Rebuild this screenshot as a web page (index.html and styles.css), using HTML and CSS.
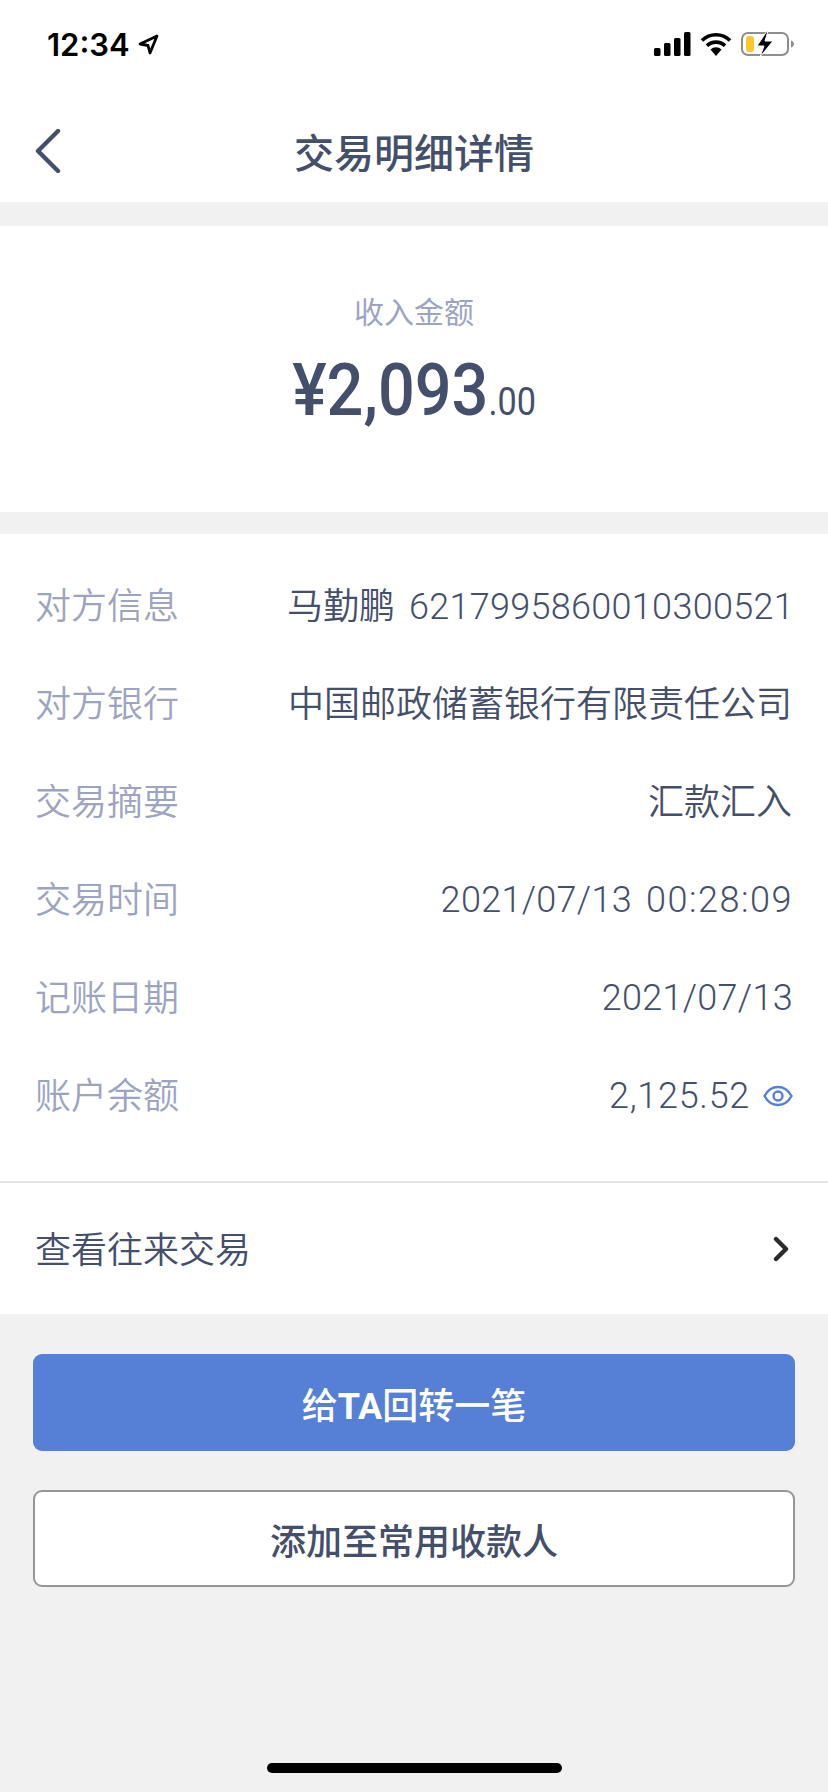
FILE: index.html
```html
<!DOCTYPE html>
<html lang="zh-CN">
<head>
  <meta charset="UTF-8">
  <meta name="viewport" content="width=device-width, initial-scale=1.0">
  <title>交易明细详情</title>
  <link rel="stylesheet" href="styles.css">
</head>
<body>
  <div class="page">
    <header class="top">
      <div class="status-bar">
        <div class="clock">
          <span>12:34</span>
          <svg width="21" height="21" viewBox="0 0 21 21"><path d="M19 2 2 10l8 1.500L12 19z" fill="none" stroke="#000" stroke-width="2.800" stroke-linejoin="round"/></svg>
        </div>
        <div class="status-icons">
          <svg width="37" height="24" viewBox="0 0 37 24"><rect x="0" y="16" width="6.500" height="8" rx="1.500"/><rect x="10" y="11" width="6.500" height="13" rx="1.500"/><rect x="20" y="6" width="6.500" height="18" rx="1.500"/><rect x="30" y="0" width="6.500" height="24" rx="1.500"/></svg>
          <svg width="32" height="24" viewBox="0 0 32 24"><path d="M2 8.500a20 20 0 0 1 28 0M7 13.700a13 13 0 0 1 18 0" fill="none" stroke="#000" stroke-width="3.600"/><path d="M10.500 17.500a8 8 0 0 1 11 0L16 24z"/></svg>
          <svg width="54" height="26" viewBox="0 0 54 26"><rect x="1" y="2" width="46" height="22" rx="6" fill="#fff" stroke="#8e8e8e" stroke-width="2"/><rect x="5" y="5" width="8" height="16" rx="3" fill="#f7c92b"/><path d="M50 9.500c2 .6 3 2 3 3.500s-1 2.900-3 3.500z" fill="#8e8e8e"/><path d="M26 0 16 15h7l-4 11 13-16h-8l3-10z" stroke="#fff" stroke-width="1"/></svg>
        </div>
      </div>
      <div class="nav">
        <svg class="back" width="26" height="44" viewBox="0 0 26 44"><path d="M23 2 3 22l20 20" fill="none" stroke="#444f6b" stroke-width="4.400" stroke-linecap="round" stroke-linejoin="round"/></svg>
        <h1>交易明细详情</h1>
      </div>
    </header>

    <section class="amount-card">
      <p class="amount-label">收入金额</p>
      <p class="amount"><span class="amount-main">¥2,093</span><span class="amount-cents">.00</span></p>
    </section>

    <section class="detail-card">
      <div class="rows">
        <div class="row"><span class="label">对方信息</span><span class="value">马勤鹏 <span class="account-no">6217995860010300521</span></span></div>
        <div class="row"><span class="label">对方银行</span><span class="value">中国邮政储蓄银行有限责任公司</span></div>
        <div class="row"><span class="label">交易摘要</span><span class="value">汇款汇入</span></div>
        <div class="row"><span class="label">交易时间</span><span class="value value-digits value-time">2021/07/13 <span class="time-part">00:28:09</span></span></div>
        <div class="row"><span class="label">记账日期</span><span class="value value-digits">2021/07/13</span></div>
        <div class="row">
          <span class="label">账户余额</span>
          <span class="value value-digits value-eye">2,125.52
            <svg width="30" height="22" viewBox="0 0 30 22"><path d="M1.500 11C5 4.500 10 2 15 2s10 2.500 13.500 9C25 17.500 20 20 15 20S5 17.500 1.500 11z" fill="none" stroke="#5580d6" stroke-width="2.400"/><circle cx="15" cy="11" r="4.500" fill="none" stroke="#5580d6" stroke-width="2.400"/></svg>
          </span>
        </div>
      </div>
      <div class="history">
        <span class="history-text">查看往来交易</span>
        <svg width="16" height="26" viewBox="0 0 16 26"><path d="M3 3l10 10L3 23" fill="none" stroke="#2b2b2d" stroke-width="4.400" stroke-linecap="round" stroke-linejoin="round"/></svg>
      </div>
    </section>

    <div class="actions">
      <button class="btn btn-primary">给<span class="btn-latin">TA</span>回转一笔</button>
      <button class="btn btn-outline">添加至常用收款人</button>
    </div>

    <div class="home-bar"></div>
  </div>
</body>
</html>
```

FILE: styles.css
```css
* {
  box-sizing: border-box;
}
html, body {
  margin: 0;
  padding: 0;
}
body {
  font-family: Inter, "Noto Sans CJK SC", sans-serif;
  background-color: #f1f1f1;
  color: #444f6b;
}
p, h1 {
  margin: 0;
}
.page {
  width: 828px;
  height: 1792px;
  display: flex;
  flex-direction: column;
  position: relative;
  overflow: hidden;
}
.top {
  height: 202px;
  background-color: #fff;
  margin-bottom: 24px;
}
.status-bar {
  height: 88px;
  padding: 0 33px 0 47px;
  display: flex;
  align-items: center;
  justify-content: space-between;
}
.clock {
  display: flex;
  align-items: center;
  gap: 8px;
  font-size: 31px;
  font-weight: 600;
  color: #000;
}
.status-icons {
  display: flex;
  align-items: center;
  gap: 9px;
}
.nav {
  height: 114px;
  padding: 11px 0 0 35px;
  display: flex;
  align-items: center;
  position: relative;
}
.nav h1 {
  position: absolute;
  left: 0;
  right: 0;
  text-align: center;
  font-size: 40px;
  font-weight: 500;
}
.amount-card {
  height: 286px;
  background-color: #fff;
  margin-bottom: 22px;
  padding-top: 64px;
  text-align: center;
}
.amount-label {
  font-size: 30px;
  line-height: 44px;
  color: #9ca4c2;
}
.amount {
  margin-top: 15px;
  line-height: 84px;
  font-family: Roboto, sans-serif;
  font-weight: 500;
  transform: scaleX(0.9);
}
.amount-main {
  font-size: 72px;
}
.amount-cents {
  font-size: 38px;
  font-weight: 400;
}
.detail-card {
  height: 780px;
  background-color: #fff;
  display: flex;
  flex-direction: column;
}
.rows {
  height: 649px;
  padding: 20px 36px 0 35px;
  border-bottom: 2px solid #e4e4e4;
}
.row {
  height: 98px;
  display: flex;
  align-items: center;
  justify-content: space-between;
  font-size: 36px;
  font-weight: 350;
}
.label {
  flex-shrink: 0;
  color: #9ca4c2;
}
.value {
  font-family: Roboto, "Noto Sans CJK SC", sans-serif;
  white-space: nowrap;
  color: #444f6b;
}
.account-no {
  letter-spacing: 0.3px;
  margin-left: 5px;
  margin-right: -2px;
}
.value-digits {
  padding-top: 6px;
  margin-right: -1px;
  letter-spacing: 0.3px;
}
.value-time {
  word-spacing: 5px;
}
.time-part {
  letter-spacing: 1.5px;
}
.value-eye {
  display: flex;
  align-items: center;
  gap: 13px;
  letter-spacing: 0.7px;
}
.history {
  flex: 1;
  padding: 0 39px 0 35px;
  display: flex;
  align-items: center;
  justify-content: space-between;
  font-size: 36px;
  font-weight: 350;
}
.history-text {
  padding-bottom: 3px;
}
.actions {
  padding: 40px 33px 0;
  display: flex;
  flex-direction: column;
  gap: 39px;
}
.btn {
  height: 97px;
  border-radius: 9px;
  font-family: inherit;
  font-size: 36px;
  font-weight: 500;
}
.btn-latin {
  font-family: Roboto, sans-serif;
  font-weight: 700;
}
.btn-primary {
  border: none;
  background-color: #5580d6;
  color: #fff;
}
.btn-outline {
  border: 2px solid #969696;
  background-color: #fff;
  color: #444f6b;
}
.home-bar {
  position: absolute;
  left: 267px;
  bottom: 19px;
  width: 295px;
  height: 10px;
  border-radius: 5px;
  background-color: #000;
}
```
